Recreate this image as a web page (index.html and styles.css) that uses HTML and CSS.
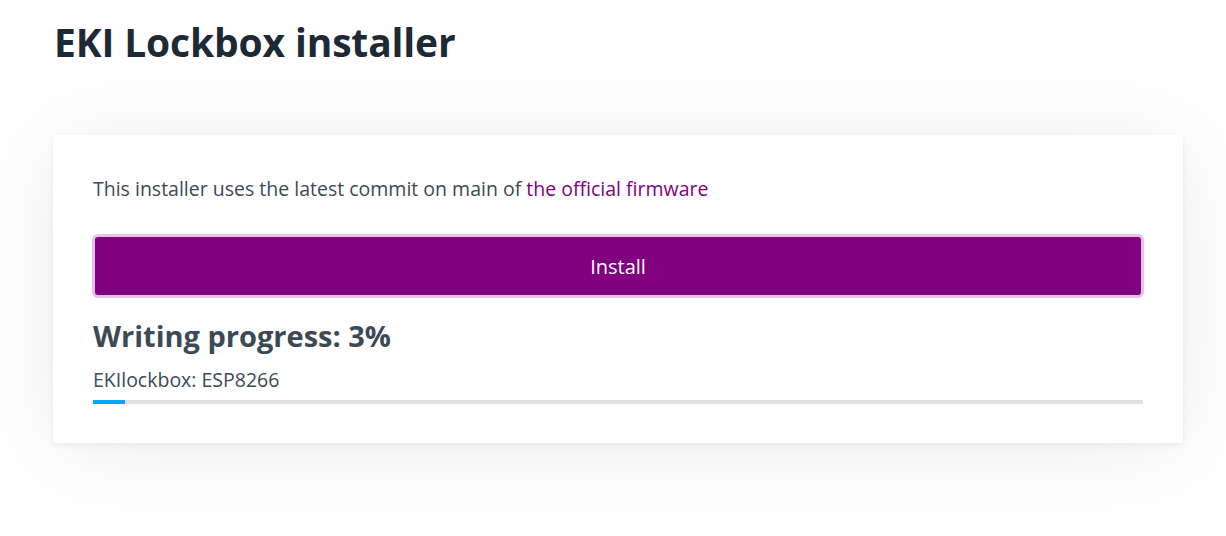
FILE: index.html
```html
<!DOCTYPE html>
<html lang="en">
<head>
<meta charset="utf-8">
<title>EKI Lockbox installer</title>
<link rel="stylesheet" href="styles.css">
</head>
<body>
<main class="page">
  <h1 class="title">EKI Lockbox installer</h1>
  <section class="card">
    <p class="intro">This installer uses the latest commit on main of <a class="link" href="#">the official firmware</a></p>
    <button class="install" type="button">Install</button>
    <h2 class="progress-title">Writing progress: 3%</h2>
    <div class="device">EKIlockbox: ESP8266</div>
    <div class="bar"><div class="bar-fill" style="width:3%"></div></div>
  </section>
</main>
</body>
</html>
```
FILE: styles.css
```css
html, body {
  margin: 0;
  padding: 0;
  background: #ffffff;
}
body {
  font-family: "Open Sans", "Noto Sans", sans-serif;
  color: #3c4a55;
  min-height: 100vh;
}
.page {
  padding: 18px 43px 93px 53px;
  box-sizing: border-box;
}
.title {
  margin: 0 0 0 1px;
  font-size: 39px;
  line-height: 48px;
  font-weight: 700;
  color: #1d2a36;
  letter-spacing: -0.15px;
}
.card {
  margin-top: 69px;
  background: #fff;
  border-radius: 4px;
  box-shadow: 0 2px 6px rgba(0,0,0,0.06), 0 6px 90px rgba(0,0,0,0.08);
  padding: 39px 40px 39px 40px;
  display: flex;
  flex-direction: column;
}
.intro {
  margin: 0;
  font-size: 19.5px;
  line-height: 30px;
}
.link {
  color: #800080;
  text-decoration: none;
}
.install {
  margin: 30px -1px 0;
  height: 64px;
  background: #800080;
  border: 3px solid #e4c2e4;
  border-radius: 6px;
  color: #fff;
  font-family: inherit;
  font-size: 20px;
}
.progress-title {
  margin: 20px 0 0;
  font-size: 29px;
  line-height: 36px;
  font-weight: 700;
  color: #3c4a55;
}
.device {
  margin-top: 14px;
  font-size: 19.5px;
  line-height: 24px;
}
.bar {
  margin-top: 8px;
  height: 4px;
  background: #e2e2e2;
}
.bar-fill {
  height: 100%;
  background: #03a9f4;
}
```
